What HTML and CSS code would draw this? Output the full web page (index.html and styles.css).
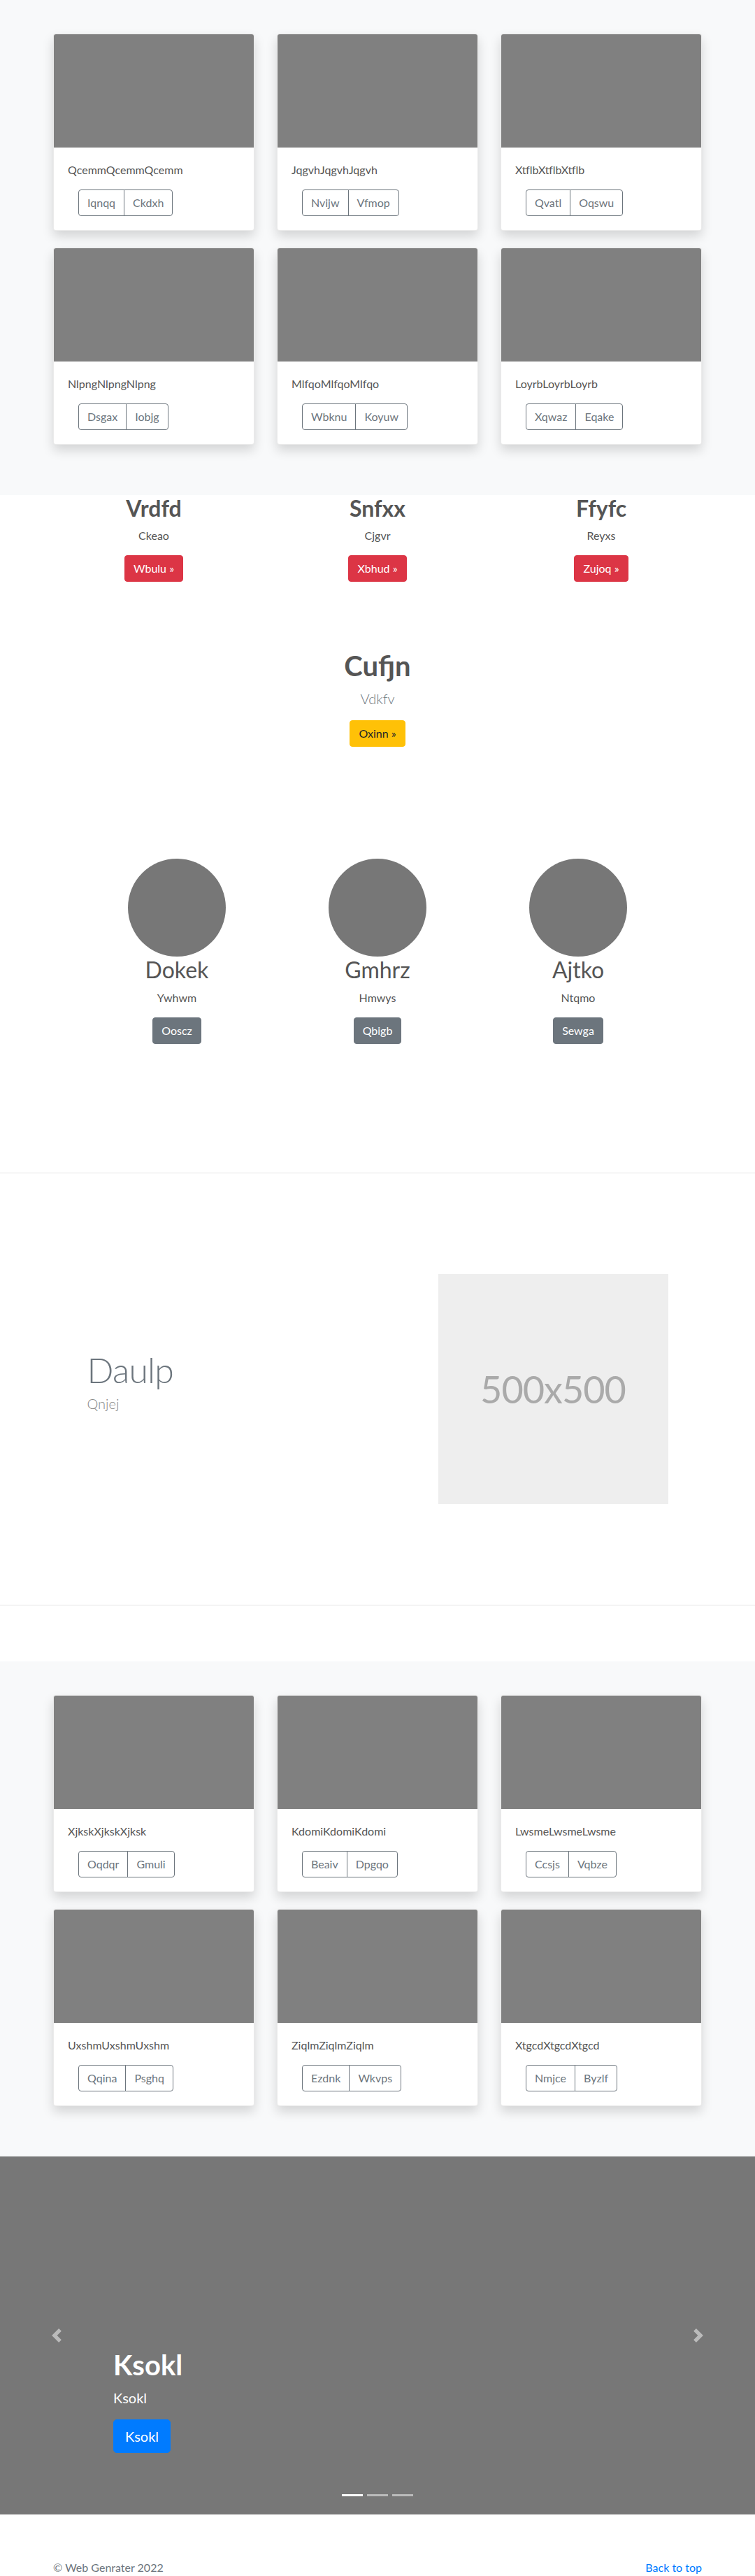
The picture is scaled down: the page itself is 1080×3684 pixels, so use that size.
FILE: index.html
```html
<!DOCTYPE html>
<html lang="en">
<head>
<meta charset="utf-8">
<title>Web Genrater</title>
<link rel="stylesheet" href="styles.css">
</head>
<body>
<main>
  <section class="album">
    <div class="album-grid">
      <div class="card"><div class="card-img"></div><div class="card-body"><p class="card-text">QcemmQcemmQcemm</p><div class="btn-group"><a class="btn btn-outline" href="#">Iqnqq</a><a class="btn btn-outline" href="#">Ckdxh</a></div></div></div>
      <div class="card"><div class="card-img"></div><div class="card-body"><p class="card-text">JqgvhJqgvhJqgvh</p><div class="btn-group"><a class="btn btn-outline" href="#">Nvijw</a><a class="btn btn-outline" href="#">Vfmop</a></div></div></div>
      <div class="card"><div class="card-img"></div><div class="card-body"><p class="card-text">XtflbXtflbXtflb</p><div class="btn-group"><a class="btn btn-outline" href="#">Qvatl</a><a class="btn btn-outline" href="#">Oqswu</a></div></div></div>
      <div class="card"><div class="card-img"></div><div class="card-body"><p class="card-text">NlpngNlpngNlpng</p><div class="btn-group"><a class="btn btn-outline" href="#">Dsgax</a><a class="btn btn-outline" href="#">Iobjg</a></div></div></div>
      <div class="card"><div class="card-img"></div><div class="card-body"><p class="card-text">MlfqoMlfqoMlfqo</p><div class="btn-group"><a class="btn btn-outline" href="#">Wbknu</a><a class="btn btn-outline" href="#">Koyuw</a></div></div></div>
      <div class="card"><div class="card-img"></div><div class="card-body"><p class="card-text">LoyrbLoyrbLoyrb</p><div class="btn-group"><a class="btn btn-outline" href="#">Xqwaz</a><a class="btn btn-outline" href="#">Eqake</a></div></div></div>
    </div>
  </section>

  <section class="features">
    <div class="feature"><h2>Vrdfd</h2><p>Ckeao</p><div class="btn-row"><a class="btn btn-danger" href="#">Wbulu &raquo;</a></div></div>
    <div class="feature"><h2>Snfxx</h2><p>Cjgvr</p><div class="btn-row"><a class="btn btn-danger" href="#">Xbhud &raquo;</a></div></div>
    <div class="feature"><h2>Ffyfc</h2><p>Reyxs</p><div class="btn-row"><a class="btn btn-danger" href="#">Zujoq &raquo;</a></div></div>
  </section>

  <section class="hero">
    <h1>Cufjn</h1>
    <p class="lead">Vdkfv</p>
    <div class="btn-row"><a class="btn btn-warning" href="#">Oxinn &raquo;</a></div>
  </section>

  <section class="circles">
    <div class="person"><div class="circle"></div><h2>Dokek</h2><p>Ywhwm</p><div class="btn-row"><a class="btn btn-secondary" href="#">Ooscz</a></div></div>
    <div class="person"><div class="circle"></div><h2>Gmhrz</h2><p>Hmwys</p><div class="btn-row"><a class="btn btn-secondary" href="#">Qbigb</a></div></div>
    <div class="person"><div class="circle"></div><h2>Ajtko</h2><p>Ntqmo</p><div class="btn-row"><a class="btn btn-secondary" href="#">Sewga</a></div></div>
  </section>

  <hr class="divider">

  <section class="featurette">
    <div class="featurette-text">
      <h2>Daulp</h2>
      <p class="lead">Qnjej</p>
    </div>
    <div class="placeholder">500x500</div>
  </section>

  <hr class="divider">

  <section class="album album-second">
    <div class="album-grid">
      <div class="card"><div class="card-img"></div><div class="card-body"><p class="card-text">XjkskXjkskXjksk</p><div class="btn-group"><a class="btn btn-outline" href="#">Oqdqr</a><a class="btn btn-outline" href="#">Gmuli</a></div></div></div>
      <div class="card"><div class="card-img"></div><div class="card-body"><p class="card-text">KdomiKdomiKdomi</p><div class="btn-group"><a class="btn btn-outline" href="#">Beaiv</a><a class="btn btn-outline" href="#">Dpgqo</a></div></div></div>
      <div class="card"><div class="card-img"></div><div class="card-body"><p class="card-text">LwsmeLwsmeLwsme</p><div class="btn-group"><a class="btn btn-outline" href="#">Ccsjs</a><a class="btn btn-outline" href="#">Vqbze</a></div></div></div>
      <div class="card"><div class="card-img"></div><div class="card-body"><p class="card-text">UxshmUxshmUxshm</p><div class="btn-group"><a class="btn btn-outline" href="#">Qqina</a><a class="btn btn-outline" href="#">Psghq</a></div></div></div>
      <div class="card"><div class="card-img"></div><div class="card-body"><p class="card-text">ZiqlmZiqlmZiqlm</p><div class="btn-group"><a class="btn btn-outline" href="#">Ezdnk</a><a class="btn btn-outline" href="#">Wkvps</a></div></div></div>
      <div class="card"><div class="card-img"></div><div class="card-body"><p class="card-text">XtgcdXtgcdXtgcd</p><div class="btn-group"><a class="btn btn-outline" href="#">Nmjce</a><a class="btn btn-outline" href="#">Byzlf</a></div></div></div>
    </div>
  </section>

  <section class="carousel">
    <a class="ctrl ctrl-prev" href="#" aria-label="Previous">
      <svg viewBox="0 0 8 8" width="20" height="20"><path fill="#fff" d="M5.25 0l-4 4 4 4 1.5-1.5L4.25 4l2.5-2.5L5.25 0z"/></svg>
    </a>
    <a class="ctrl ctrl-next" href="#" aria-label="Next">
      <svg viewBox="0 0 8 8" width="20" height="20"><path fill="#fff" d="M2.75 0l-1.5 1.5L3.75 4l-2.5 2.5L2.75 8l4-4-4-4z"/></svg>
    </a>
    <div class="caption">
      <h1>Ksokl</h1>
      <p class="lead-caption">Ksokl</p>
      <div class="btn-row"><a class="btn btn-lg btn-primary" href="#">Ksokl</a></div>
    </div>
    <div class="indicators"><span class="ind active"></span><span class="ind"></span><span class="ind"></span></div>
  </section>
</main>

<footer class="footer">
  <div class="footer-inner">
    <p>&copy; Web Genrater 2022</p>
    <p><a href="#">Back to top</a></p>
  </div>
</footer>
</body>
</html>
```

FILE: styles.css
```css
* { box-sizing: border-box; }

html, body { margin: 0; padding: 0; }

body {
  font-family: Lato, "Noto Sans", "Liberation Sans", sans-serif;
  font-size: 16px;
  line-height: 1.5;
  color: #555;
  background: #fff;
}

h1, h2, p { margin: 0; }

/* ---------- buttons ---------- */
.btn-row { display: flex; justify-content: center; }

.btn {
  display: inline-block;
  font-family: inherit;
  font-size: 16px;
  line-height: 24px;
  padding: 6px 12px;
  border: 1px solid transparent;
  border-radius: 4px;
  text-decoration: none;
  white-space: nowrap;
}

.btn-outline { color: #6c757d; border-color: #6c757d; background: transparent; }
.btn-danger { background: #dc3545; border-color: #dc3545; color: #fff; }
.btn-warning { background: #ffc107; border-color: #ffc107; color: #212529; }
.btn-secondary { background: #6c757d; border-color: #6c757d; color: #fff; }
.btn-primary { background: #007bff; border-color: #007bff; color: #fff; }
.btn-lg { font-size: 20px; line-height: 30px; padding: 8px 16px; border-radius: 5px; }

.btn-group { display: inline-flex; margin-left: 15px; }
.btn-group .btn:first-child { border-top-right-radius: 0; border-bottom-right-radius: 0; }
.btn-group .btn + .btn { margin-left: -1px; border-top-left-radius: 0; border-bottom-left-radius: 0; }

/* ---------- album ---------- */
.album { background: #f8f9fa; padding: 48px 0; }
.album-second { margin-top: 80px; }

.album-grid {
  width: 928px;
  margin: 0 auto;
  display: grid;
  grid-template-columns: repeat(3, 288px);
  column-gap: 32px;
  row-gap: 24px;
  padding-bottom: 24px;
}

.card {
  background: #fff;
  border: 1px solid rgba(0, 0, 0, 0.08);
  border-radius: 4px;
  overflow: hidden;
  box-shadow: 0 8px 16px rgba(0, 0, 0, 0.15);
}

.card-img { height: 162px; background: #808080; }
.card-body { padding: 20px; }
.card-text { margin-bottom: 16px; color: #555; }

/* ---------- features ---------- */
.features {
  width: 960px;
  margin: 0 auto;
  display: grid;
  grid-template-columns: repeat(3, 1fr);
  text-align: center;
}

.feature h2 {
  font-size: 32px;
  line-height: 1.2;
  font-weight: 700;
  margin-bottom: 8px;
}

.feature p { margin-bottom: 16px; }
.feature .btn-row { margin-bottom: 16px; }

/* ---------- hero ---------- */
.hero { text-align: center; padding-top: 80px; }
.hero h1 { font-size: 40px; line-height: 48px; font-weight: 700; margin-bottom: 8px; }
.lead { font-size: 20px; line-height: 30px; font-weight: 300; color: #6c757d; margin-bottom: 16px; }
.hero .btn-row { margin-bottom: 16px; }

/* ---------- circles ---------- */
.circles {
  width: 861px;
  margin: 0 auto;
  display: grid;
  grid-template-columns: repeat(3, 1fr);
  text-align: center;
  padding: 144px 0 168px;
}

.circle {
  width: 140px;
  height: 140px;
  border-radius: 50%;
  background: #777;
  margin: 0 auto;
}

.person h2 { font-size: 32px; line-height: 1.2; font-weight: 400; margin-bottom: 8px; }
.person p { margin-bottom: 16px; }
.person .btn-row { margin-bottom: 16px; }

/* ---------- divider ---------- */
.divider { border: 0; border-top: 1px solid #e5e5e5; margin: 0; height: 0; }

/* ---------- featurette ---------- */
.featurette {
  width: 831px;
  margin: 0 auto;
  padding: 144px 0;
  display: flex;
  align-items: center;
  justify-content: space-between;
}

.featurette-text h2 {
  font-size: 50px;
  line-height: 1;
  font-weight: 300;
  letter-spacing: -0.8px;
  color: #6c757d;
  margin-bottom: 8px;
}

.featurette-text .lead { color: #888; }

.placeholder {
  width: 329px;
  height: 329px;
  background: #eee;
  color: #aaa;
  display: flex;
  align-items: center;
  justify-content: center;
  font-size: 54px;
  letter-spacing: -1px;
}

/* ---------- carousel ---------- */
.carousel { position: relative; height: 512px; background: #777; }

.ctrl {
  position: absolute;
  top: 0;
  bottom: 0;
  width: 15%;
  display: flex;
  align-items: center;
  justify-content: center;
  opacity: 0.5;
}
.ctrl-prev { left: 0; }
.ctrl-next { right: 0; }

.caption {
  position: absolute;
  left: 15%;
  right: 15%;
  bottom: 68px;
  padding-bottom: 20px;
  color: #fff;
}

.caption h1 { font-size: 40px; line-height: 48px; font-weight: 700; margin-bottom: 8px; }
.lead-caption { font-size: 20px; line-height: 30px; margin-bottom: 16px; }
.caption .btn-row { justify-content: flex-start; }

.indicators {
  position: absolute;
  left: 0;
  right: 0;
  bottom: 26px;
  display: flex;
  justify-content: center;
  gap: 6px;
}

.ind { width: 30px; height: 3px; background: rgba(255, 255, 255, 0.5); }
.ind.active { background: #fff; }

/* ---------- footer ---------- */
.footer { padding: 64px 0 48px; color: #6c757d; }
.footer-inner { width: 928px; margin: 0 auto; display: flex; justify-content: space-between; }
.footer a { color: #007bff; text-decoration: none; }
```
